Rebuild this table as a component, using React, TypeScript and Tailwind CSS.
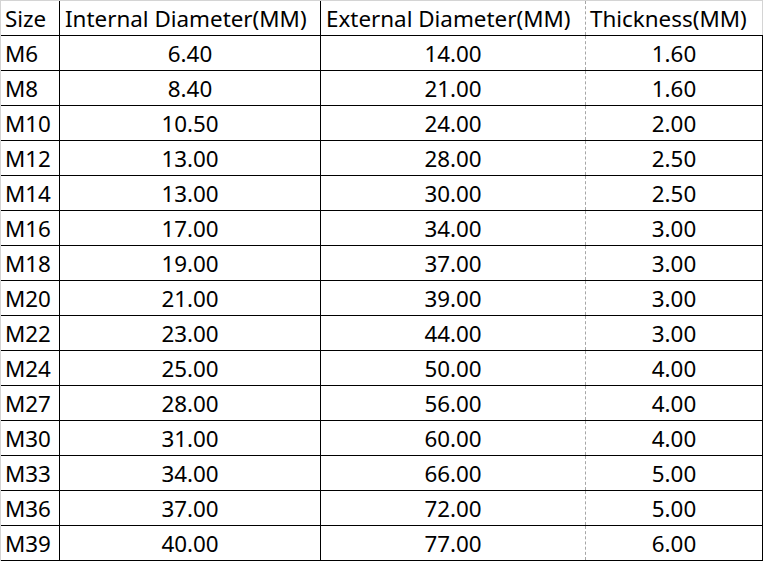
const rows: [string, string, string, string][] = [
  ['M6', '6.40', '14.00', '1.60'],
  ['M8', '8.40', '21.00', '1.60'],
  ['M10', '10.50', '24.00', '2.00'],
  ['M12', '13.00', '28.00', '2.50'],
  ['M14', '13.00', '30.00', '2.50'],
  ['M16', '17.00', '34.00', '3.00'],
  ['M18', '19.00', '37.00', '3.00'],
  ['M20', '21.00', '39.00', '3.00'],
  ['M22', '23.00', '44.00', '3.00'],
  ['M24', '25.00', '50.00', '4.00'],
  ['M27', '28.00', '56.00', '4.00'],
  ['M30', '31.00', '60.00', '4.00'],
  ['M33', '34.00', '66.00', '5.00'],
  ['M36', '37.00', '72.00', '5.00'],
  ['M39', '40.00', '77.00', '6.00'],
];

export default function App() {
  return (
    <div className="w-[764px] h-[562px] bg-white text-black text-[22.4px] leading-none font-['Noto_Sans',sans-serif]">
      <div className="w-[763px] border-t border-l border-[#d4d4d4]">
        {/* header */}
        <div className="flex h-[35px] border-b border-black">
          <div className="w-[59px] flex items-center pl-1 pt-[2px] border-r border-black">Size</div>
          <div className="w-[261px] flex items-center pl-[5px] pt-[2px] border-r border-black">Internal Diameter(MM)</div>
          <div className="w-[265px] flex items-center pl-[5px] pt-[2px] border-r border-dashed border-[#a6a6a6]">External Diameter(MM)</div>
          <div className="w-[177px] flex items-center pl-[4px] pt-[2px] border-r border-[#d4d4d4]">Thickness(MM)</div>
        </div>
        {rows.map((r) => (
          <div key={r[0]} className="flex h-[35px] border-b border-black">
            <div className="w-[59px] flex items-center pl-1 pt-[2px] border-r border-black">{r[0]}</div>
            <div className="w-[261px] flex items-center justify-center pt-[2px] border-r border-black">{r[1]}</div>
            <div className="w-[265px] flex items-center justify-center pt-[2px] border-r border-dashed border-[#a6a6a6]">{r[2]}</div>
            <div className="w-[177px] flex items-center justify-center pt-[2px] border-r border-black">{r[3]}</div>
          </div>
        ))}
      </div>
    </div>
  );
}
